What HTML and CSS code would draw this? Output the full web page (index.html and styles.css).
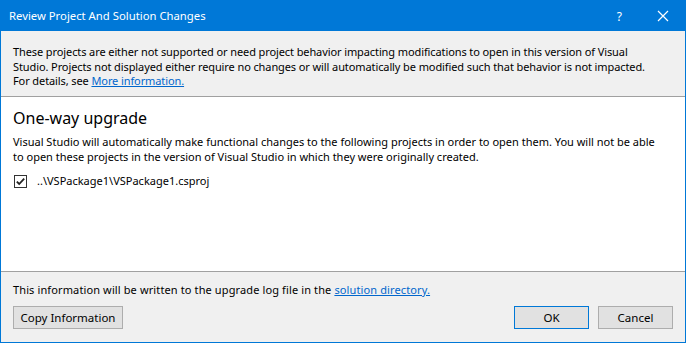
FILE: index.html
```html
<!DOCTYPE html>
<html>
<head>
<meta charset="utf-8">
<link rel="stylesheet" href="styles.css">
</head>
<body>
<div class="window">
  <div class="titlebar">
    <span class="title">Review Project And Solution Changes</span>
    <div class="tb-buttons">
      <span class="tb-help">?</span>
      <svg class="tb-close" width="12" height="12" viewBox="0 0 12 12"><path d="M1 1 L11 11 M11 1 L1 11" stroke="#fff" stroke-width="1.2" fill="none"/></svg>
    </div>
  </div>
  <div class="info">
    <p class="txt txt-info">These projects are either not supported or need project behavior impacting modifications to open in this version of Visual<br>Studio. Projects not displayed either require no changes or will automatically be modified such that behavior is not impacted.<br>For details, see <a class="link">More information.</a></p>
  </div>
  <div class="content">
    <h1 class="heading">One-way upgrade</h1>
    <p class="txt txt-body">Visual Studio will automatically make functional changes to the following projects in order to open them. You will not be able<br>to open these projects in the version of Visual Studio in which they were originally created.</p>
    <div class="item">
      <svg class="check" width="13" height="13" viewBox="0 0 13 13"><rect x="0.5" y="0.5" width="12" height="12" fill="#fff" stroke="#333"/><path d="M2.8 6.6 L5.2 9 L10.2 3.6" stroke="#222" stroke-width="1.8" fill="none"/></svg>
      <span class="txt">..\VSPackage1\VSPackage1.csproj</span>
    </div>
  </div>
  <div class="footer">
    <p class="txt txt-foot">This information will be written to the upgrade log file in the <a class="link">solution directory.</a></p>
    <div class="buttons">
      <button class="btn btn-copy">Copy Information</button>
      <div class="spacer"></div>
      <button class="btn btn-ok">OK</button>
      <button class="btn">Cancel</button>
    </div>
  </div>
</div>
</body>
</html>
```
FILE: styles.css
```css
* { box-sizing: border-box; }
html, body { margin: 0; padding: 0; }
body { width: 686px; height: 343px; overflow: hidden; font-family: "Noto Sans", sans-serif; color: #000; }
.window { width: 686px; height: 343px; border: 1px solid #0078d7; display: flex; flex-direction: column; background: #f0f0f0; }
.titlebar { height: 30px; background: #0078d7; color: #fff; display: flex; align-items: center; padding-left: 8px; flex-shrink: 0; }
.title { font-size: 11.3px; flex: 1; padding-bottom: 2px; }
.tb-buttons { display: flex; align-items: center; gap: 35px; padding-right: 16px; }
.tb-help { font-size: 12px; }
.tb-close { display: block; }
.txt { font-size: 11px; line-height: 14.5px; margin: 0; white-space: nowrap; }
.txt-info { letter-spacing: -0.1px; }
.txt-body { line-height: 15px; }
.txt-foot { letter-spacing: 0.12px; }
.link { color: #0066cc; text-decoration: underline; }
.info { height: 66px; border-bottom: 1px solid #a0a0a0; padding: 14px 12px 0 12px; flex-shrink: 0; }
.content { flex: 1; background: #fff; border-bottom: 1px solid #a0a0a0; padding: 10px 12px 0 12px; }
.heading { font-size: 16px; font-weight: normal; margin: 0 0 5px 0; line-height: 22px; }
.item { display: flex; align-items: center; gap: 10px; margin-top: 10px; padding-left: 1px; }
.check { display: block; flex-shrink: 0; }
.footer { height: 70px; padding: 11px 12px 0 12px; flex-shrink: 0; }
.buttons { display: flex; margin-top: 8px; gap: 9px; }
.spacer { flex: 1; }
.btn { font-family: "Noto Sans", sans-serif; font-size: 11.5px; height: 23px; width: 75px; background: #e1e1e1; border: 1px solid #adadad; padding: 0; color: #000; }
.btn-copy { width: 110px; }
.btn-ok { border-color: #0078d7; }
```
